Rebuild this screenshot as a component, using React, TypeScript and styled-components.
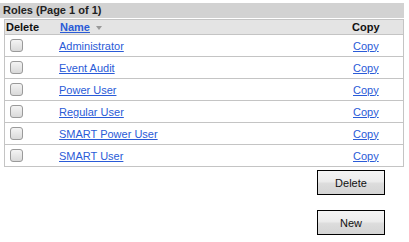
import styled, { createGlobalStyle } from "styled-components";

const GlobalStyle = createGlobalStyle`
  body {
    margin: 0;
    background: #ffffff;
    font-family: "Liberation Sans", Arial, sans-serif;
    font-size: 11px;
    color: #000;
  }
`;

const Page = styled.div`
  width: 404px;
  padding-top: 3px;
`;

const TitleBar = styled.div`
  height: 15px;
  line-height: 15px;
  background: #d2d2d2;
  color: #222;
  font-weight: bold;
  font-size: 11px;
  padding-left: 3px;
`;

const Table = styled.table`
  margin: 1px 0 0 4px;
  width: 400px;
  border-collapse: collapse;
  border: 1px solid #c4c4c4;
`;

const HeadRow = styled.tr`
  height: 15px;
  background: #e4e4e4;
  border-bottom: 1px solid #c4c4c4;
`;

const Th = styled.th<{ $pl?: number }>`
  text-align: left;
  font-weight: bold;
  font-size: 11px;
  padding: 0 0 0 ${p => p.$pl ?? 0}px;
  color: #111;
`;

const Row = styled.tr`
  height: 22px;
  border-bottom: 1px solid #c4c4c4;
`;

const Td = styled.td<{ $pl?: number; $w?: number }>`
  padding: 0 0 0 ${p => p.$pl ?? 0}px;
  width: ${p => (p.$w ? `${p.$w}px` : "auto")};
  vertical-align: middle;
`;

const Check = styled.span`
  display: block;
  width: 11px;
  height: 11px;
  border: 1px solid #9a9a9a;
  border-radius: 3px;
  background: linear-gradient(#f4f4f4, #d9d9d9);
`;

const RoleLink = styled.a`
  color: #2a5bd7;
  text-decoration: underline;
  cursor: pointer;
`;

const SortArrow = styled.span`
  display: inline-block;
  margin-left: 6px;
  width: 0;
  height: 0;
  border-left: 3px solid transparent;
  border-right: 3px solid transparent;
  border-top: 4px solid #999;
  vertical-align: middle;
`;

const Actions = styled.div`
  display: flex;
  flex-direction: column;
  align-items: flex-end;
  gap: 15px;
  margin-top: 3px;
  padding-right: 19px;
`;

const Button = styled.button`
  width: 68px;
  height: 25px;
  border: 1px solid #000;
  border-radius: 0;
  background: linear-gradient(#f3f3f3 0%, #ececec 45%, #dcdcdc 55%, #d4d4d4 100%);
  font-family: "Liberation Sans", Arial, sans-serif;
  font-size: 11px;
  color: #111;
  padding: 0;
`;

const roles = [
  "Administrator",
  "Event Audit",
  "Power User",
  "Regular User",
  "SMART Power User",
  "SMART User",
];

export default function App() {
  return (
    <Page>
      <GlobalStyle />
      <TitleBar>Roles (Page 1 of 1)</TitleBar>
      <Table>
        <thead>
          <HeadRow>
            <Th $pl={1}>Delete</Th>
            <Th $pl={4}>
              <RoleLink>Name</RoleLink>
              <SortArrow />
            </Th>
            <Th $pl={7}>Copy</Th>
          </HeadRow>
        </thead>
        <tbody>
          {roles.map(role => (
            <Row key={role}>
              <Td $pl={5} $w={46}>
                <Check />
              </Td>
              <Td $pl={3}>
                <RoleLink>{role}</RoleLink>
              </Td>
              <Td $pl={8} $w={50}>
                <RoleLink>Copy</RoleLink>
              </Td>
            </Row>
          ))}
        </tbody>
      </Table>
      <Actions>
        <Button>Delete</Button>
        <Button>New</Button>
      </Actions>
    </Page>
  );
}
